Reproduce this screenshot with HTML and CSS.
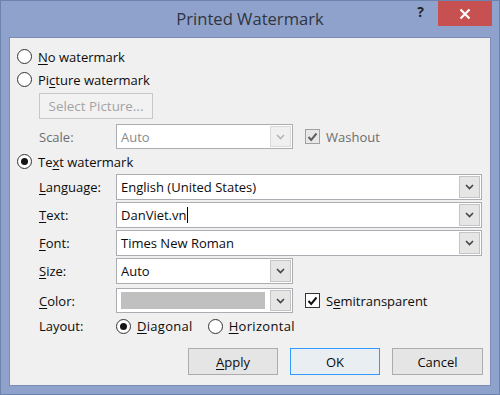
FILE: index.html
```html
<!DOCTYPE html>
<html lang="en">
<head>
    <meta charset="UTF-8">
    <title>Printed Watermark</title>
    <link rel="stylesheet" href="styles.css">
</head>
<body>
    <div class="window">
        <div class="titlebar">
            <span class="title">Printed Watermark</span>
            <div class="controls">
                <span class="help">?</span>
                <span class="close">
                    <svg width="12" height="12" viewBox="0 0 12 12"><path d="M1.5 1.5 L10.5 10.5 M10.5 1.5 L1.5 10.5" stroke="#fff" stroke-width="2.2"/></svg>
                </span>
            </div>
        </div>

        <div class="client">
            <label class="option"><span class="radio"></span><span><u>N</u>o watermark</span></label>
            <label class="option"><span class="radio"></span><span>Pi<u>c</u>ture watermark</span></label>

            <div class="indent">
                <button class="btn btn-disabled">Select Picture...</button>
                <div class="row row-scale">
                    <span class="label muted">Scale:</span>
                    <div class="combo combo-short combo-disabled">
                        <span class="value">Auto</span>
                        <span class="arrow"><svg width="9" height="6" viewBox="0 0 9 6"><polyline points="1,1 4.5,4.5 8,1" fill="none" stroke="#b5b5b5" stroke-width="1.6"/></svg></span>
                    </div>
                    <label class="checkrow muted">
                        <span class="check check-disabled"><svg width="11" height="10" viewBox="0 0 11 10"><polyline points="1.5,5 4.2,8 9.5,1.5" fill="none" stroke="#606060" stroke-width="2"/></svg></span>
                        Washout
                    </label>
                </div>
            </div>

            <label class="option option-text"><span class="radio on"></span><span>Te<u>x</u>t watermark</span></label>

            <div class="indent">
                <div class="row row-first">
                    <span class="label"><u>L</u>anguage:</span>
                    <div class="combo combo-long">
                        <span class="value">English (United States)</span>
                        <span class="arrow"><svg width="9" height="6" viewBox="0 0 9 6"><polyline points="1,1 4.5,4.5 8,1" fill="none" stroke="#444" stroke-width="1.6"/></svg></span>
                    </div>
                </div>
                <div class="row">
                    <span class="label"><u>T</u>ext:</span>
                    <div class="combo combo-long">
                        <span class="value">DanViet.vn<span class="caret"></span></span>
                        <span class="arrow"><svg width="9" height="6" viewBox="0 0 9 6"><polyline points="1,1 4.5,4.5 8,1" fill="none" stroke="#444" stroke-width="1.6"/></svg></span>
                    </div>
                </div>
                <div class="row">
                    <span class="label"><u>F</u>ont:</span>
                    <div class="combo combo-long">
                        <span class="value">Times New Roman</span>
                        <span class="arrow"><svg width="9" height="6" viewBox="0 0 9 6"><polyline points="1,1 4.5,4.5 8,1" fill="none" stroke="#444" stroke-width="1.6"/></svg></span>
                    </div>
                </div>
                <div class="row">
                    <span class="label"><u>S</u>ize:</span>
                    <div class="combo combo-short">
                        <span class="value">Auto</span>
                        <span class="arrow"><svg width="9" height="6" viewBox="0 0 9 6"><polyline points="1,1 4.5,4.5 8,1" fill="none" stroke="#444" stroke-width="1.6"/></svg></span>
                    </div>
                </div>
                <div class="row row-color">
                    <span class="label"><u>C</u>olor:</span>
                    <div class="combo combo-short">
                        <span class="swatch"></span>
                        <span class="arrow"><svg width="9" height="6" viewBox="0 0 9 6"><polyline points="1,1 4.5,4.5 8,1" fill="none" stroke="#444" stroke-width="1.6"/></svg></span>
                    </div>
                    <label class="checkrow">
                        <span class="check"><svg width="11" height="10" viewBox="0 0 11 10"><polyline points="1.5,5 4.2,8 9.5,1.5" fill="none" stroke="#111" stroke-width="2"/></svg></span>
                        <span>S<u>e</u>mitransparent</span>
                    </label>
                </div>
                <div class="row row-layout">
                    <span class="label">Layout:</span>
                    <label class="option"><span class="radio on"></span><span><u>D</u>iagonal</span></label>
                    <label class="option option-gap"><span class="radio"></span><span><u>H</u>orizontal</span></label>
                </div>
            </div>

            <div class="buttons">
                <button class="btn btn-action"><u>A</u>pply</button>
                <button class="btn btn-action btn-default">OK</button>
                <button class="btn btn-action btn-wide">Cancel</button>
            </div>
        </div>
    </div>
</body>
</html>
```

FILE: styles.css
```css
* {
    margin: 0;
    padding: 0;
    box-sizing: border-box;
}

body {
    font-family: "Open Sans", "Liberation Sans", sans-serif;
    font-size: 13px;
    color: #0c0c0c;
    background: #8fa2cb;
}

.window {
    width: 500px;
    height: 395px;
    background: #8fa2cb;
    border: 1px solid #6e82ae;
    display: flex;
    flex-direction: column;
}

.titlebar {
    height: 36px;
    display: grid;
    grid-template-columns: 1fr auto 1fr;
}

.title {
    grid-column: 2;
    font-size: 16.6px;
    color: #2f3540;
    padding-top: 6px;
}

.controls {
    grid-column: 3;
    display: flex;
    justify-content: flex-end;
    align-items: flex-start;
}

.help {
    font-weight: bold;
    font-size: 14px;
    color: #222;
    margin-top: 1px;
    margin-right: 14px;
}

.close {
    width: 54px;
    height: 25px;
    margin-right: 7px;
    background: #c75050;
    display: flex;
    align-items: center;
    justify-content: center;
}

.client {
    flex: 1;
    margin: 0 8px 8px 8px;
    background: #f0f0f0;
    border: 1px solid #7b8db6;
    padding: 7px 7px 0 7px;
}

u {
    text-decoration: underline;
    text-underline-offset: 2px;
}

.option {
    display: flex;
    align-items: center;
    gap: 6px;
    height: 23px;
}

.radio {
    width: 15px;
    height: 15px;
    border-radius: 50%;
    border: 1px solid #333;
    background: #fff;
    display: flex;
    align-items: center;
    justify-content: center;
}

.radio.on::after {
    content: "";
    width: 7px;
    height: 7px;
    border-radius: 50%;
    background: #151515;
}

.indent {
    padding-left: 22px;
}

.btn {
    font-family: inherit;
    font-size: 13px;
    color: #0c0c0c;
    background: #e5e5e5;
    border: 1px solid #acacac;
    height: 27px;
}

.btn-disabled {
    margin-top: 2px;
    width: 114px;
    height: 26px;
    font-size: 13.4px;
    color: #a3a3a3;
    background: #f2f2f2;
    border-color: #c8c8c8;
}

.row {
    display: flex;
    align-items: center;
    height: 26px;
    margin-top: 2px;
}

.row-scale {
    margin-top: 5px;
    height: 25px;
}

.row-first {
    margin-top: 1px;
}

.row-color {
    margin-top: 4px;
    height: 25px;
}

.row-layout {
    margin-top: 3px;
    height: 20px;
}

.label {
    width: 77px;
}

.muted {
    color: #6d6d6d;
}

.option-text {
    margin-top: 1px;
}

.row-layout .option span:last-child {
    letter-spacing: 0.3px;
}

.option-gap {
    margin-left: 15px;
}

.combo {
    display: flex;
    height: 100%;
    background: #fff;
    border: 1px solid #abadb3;
}

.combo-long {
    width: 366px;
}

.combo-short {
    width: 177px;
}

.combo .value {
    flex: 1;
    display: flex;
    align-items: center;
    padding-left: 4px;
}

.combo-disabled .value {
    color: #8a8a8a;
}

.arrow {
    width: 21px;
    margin: 1px;
    background: #e6e6e6;
    border: 1px solid #c4c4c4;
    display: flex;
    align-items: center;
    justify-content: center;
}

.combo-disabled .arrow {
    background: #f0f0f0;
    border-color: #dadada;
}

.caret {
    display: inline-block;
    width: 1px;
    height: 16px;
    background: #000;
    margin-left: 1px;
}

.swatch {
    flex: 1;
    margin: 3px 4px;
    background: #c0c0c0;
}

.checkrow {
    display: flex;
    align-items: center;
    gap: 6px;
    margin-left: 12px;
}

.check {
    width: 15px;
    height: 15px;
    border: 1px solid #333;
    background: #fff;
    display: flex;
    align-items: center;
    justify-content: center;
}

.check-disabled {
    border-color: #a0a0a0;
    background: #e8e8e8;
}

.buttons {
    display: flex;
    justify-content: flex-end;
    gap: 12px;
    margin-top: 12px;
}

.btn-action {
    width: 90px;
}

.btn-wide {
    width: 91px;
}

.btn-default {
    border-color: #3399ff;
    background: #e9eef3;
}
```
